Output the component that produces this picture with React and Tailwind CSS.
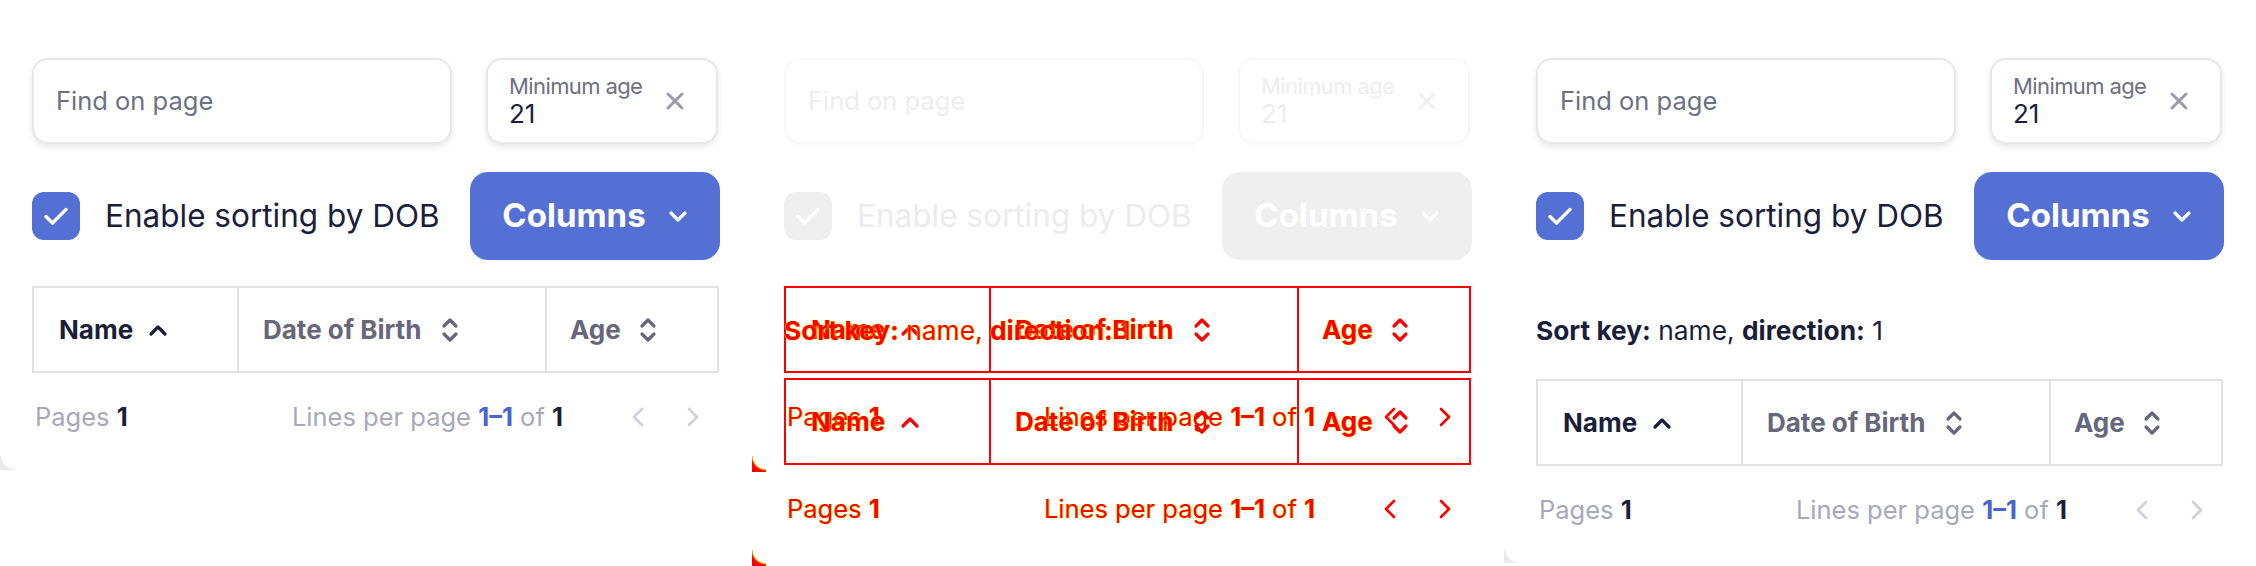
import React from 'react';

// diff tone: red pixels with a thin yellow fringe
const DIFF = 'text-[#ff0000] [text-shadow:0_0_1px_#ffff00,0_0_1px_#ffff00]';

const tones = {
  normal: {
    dark: 'text-[#1b1e3b]',
    head: 'text-[#66677b]',
    muted: 'text-[#a7a9b8]',
    blue: 'text-[#4b64cf]',
    chev: 'text-[#cfd0d8]',
    border: 'border-[#e2e2e2]',
  },
  diff: {
    dark: DIFF,
    head: DIFF,
    muted: DIFF,
    blue: DIFF,
    chev: DIFF,
    border: 'border-[#ff0000]',
  },
};

const Stroke = ({ className, viewBox, d, width = 3.2 }) => (
  <svg viewBox={viewBox} className={className} fill="none" stroke="currentColor" strokeWidth={width} strokeLinecap="round" strokeLinejoin="round">
    <path d={d} />
  </svg>
);

const ChevUp = ({ className }) => <Stroke className={className} viewBox="0 0 20 14" d="M3 11 L10 4 L17 11" />;
const ChevDown = ({ className }) => <Stroke className={className} viewBox="0 0 20 13" d="M3 3 L10 10 L17 3" />;
const UpDown = ({ className }) => <Stroke className={className} viewBox="0 0 20 28" d="M4 10 L10 4 L16 10 M4 18 L10 24 L16 18" />;
const ChevLeft = ({ className }) => <Stroke className={className} viewBox="0 0 14 20" d="M11 2 L3 10 L11 18" width={2.6} />;
const ChevRight = ({ className }) => <Stroke className={className} viewBox="0 0 14 20" d="M3 2 L11 10 L3 18" width={2.6} />;
const XIcon = ({ className }) => <Stroke className={className} viewBox="0 0 20 20" d="M3 3 L17 17 M17 3 L3 17" width={3} />;
const Check = ({ className }) => <Stroke className={className} viewBox="0 0 26 20" d="M3 10.5 L9.5 17 L23 3.5" width={3.4} />;

const Controls = ({ faded }) => (
  <div className="flex flex-col gap-[28px]">
    <div className="flex gap-[34px]">
      <div
        className={`w-[420px] h-[86px] rounded-[16px] border-2 bg-white flex items-center pl-[22px] text-[25.5px] ${
          faded ? 'border-[#f7f7f7] text-[#eeeef0] shadow-[0_3px_6px_rgba(0,0,0,0.02)]' : 'border-[#e8e8e8] text-[#6d7183] shadow-[0_3px_6px_rgba(0,0,0,0.09)]'
        }`}
      >
        Find on page
      </div>
      <div
        className={`w-[232px] h-[86px] rounded-[16px] border-2 bg-white flex items-center pl-[21px] pr-[31px] ${
          faded ? 'border-[#f7f7f7] shadow-[0_3px_6px_rgba(0,0,0,0.02)]' : 'border-[#e8e8e8] shadow-[0_3px_6px_rgba(0,0,0,0.09)]'
        }`}
      >
        <div className="flex flex-col flex-1">
          <span className={`text-[22px] leading-[25px] tracking-[-0.6px] ${faded ? 'text-[#eeeef0]' : 'text-[#6e7082]'}`}>Minimum age</span>
          <span className={`text-[26px] leading-[30px] ${faded ? 'text-[#eeeef0]' : 'text-[#1b1e3b]'}`}>21</span>
        </div>
        <XIcon className={`w-[20px] h-[20px] ${faded ? 'text-[#f1f1f3]' : 'text-[#9c9ca7]'}`} />
      </div>
    </div>

    <div className="flex items-center justify-between">
      <div className="flex items-center gap-[25px]">
        <div className={`w-[48px] h-[48px] rounded-[12px] flex items-center justify-center ${faded ? 'bg-[#efeff0]' : 'bg-[#5570d5]'}`}>
          <Check className="w-[26px] h-[20px] text-white" />
        </div>
        <span className={`text-[31.5px] ${faded ? 'text-[#ececee]' : 'text-[#1b1e3b]'}`}>Enable sorting by DOB</span>
      </div>
      <button className={`w-[250px] h-[88px] rounded-[18px] flex items-center justify-center gap-[22px] text-white font-bold text-[33px] ${faded ? 'bg-[#efeff0]' : 'bg-[#5570d5]'}`}>
        Columns
        <ChevDown className="w-[20px] h-[13px]" />
      </button>
    </div>
  </div>
);

const Table = ({ tone }) => {
  const t = tones[tone];
  return (
    <div className={`w-[687px] h-[87px] border-2 grid grid-cols-[203px_308px_1fr] ${t.border}`}>
      <div className="flex items-center pl-[25px] gap-[15px]">
        <span className={`text-[26px] font-bold ${t.dark}`}>Name</span>
        <ChevUp className={`w-[20px] h-[14px] ${t.dark}`} />
      </div>
      <div className={`border-l-2 flex items-center pl-[24px] gap-[19px] ${t.border}`}>
        <span className={`text-[26px] font-bold ${t.head}`}>Date of Birth</span>
        <UpDown className={`w-[20px] h-[28px] ${t.head}`} />
      </div>
      <div className={`border-l-2 flex items-center pl-[23px] gap-[17px] ${t.border}`}>
        <span className={`text-[26px] font-bold ${t.head}`}>Age</span>
        <UpDown className={`w-[20px] h-[28px] ${t.head}`} />
      </div>
    </div>
  );
};

const Footer = ({ tone }) => {
  const t = tones[tone];
  return (
    <div className="h-[30px] flex items-center justify-between text-[25.5px] pl-[3px] pr-[20px]">
      <span className={t.muted}>
        Pages <span className={`font-bold ${t.dark}`}>1</span>
      </span>
      <div className="flex items-center">
        <span className={t.muted}>
          Lines per page <span className={`font-bold ${t.blue}`}>1–1</span> of <span className={`font-bold ${t.dark}`}>1</span>
        </span>
        <ChevLeft className={`ml-[68px] w-[14px] h-[20px] ${t.chev}`} />
        <ChevRight className={`ml-[41px] w-[14px] h-[20px] ${t.chev}`} />
      </div>
    </div>
  );
};

const SortKey = ({ tone }) => {
  const t = tones[tone];
  return (
    <div className={`h-[30px] flex items-center text-[26.3px] ${t.dark}`}>
      <span>
        <b>Sort key:</b> name, <b>direction:</b> 1
      </span>
    </div>
  );
};

const Panel = ({ withSortKey }) => (
  <div className="w-[752px] h-[566px] bg-white shrink-0">
    <div className="relative bg-white px-[32px] pt-[58px] pb-[38px]">
      <Controls />
      {withSortKey ? (
        <>
          <div className="mt-[56px]"><SortKey tone="normal" /></div>
          <div className="mt-[33px]"><Table tone="normal" /></div>
        </>
      ) : (
        <div className="mt-[26px]"><Table tone="normal" /></div>
      )}
      <div className="mt-[29px]"><Footer tone="normal" /></div>
      {/* background showing past the rounded card corner */}
      <div className="absolute left-0 bottom-0 w-[14px] h-[14px] bg-[radial-gradient(circle_at_100%_0%,#ffffff_12px,#e9e9ec_14px)]" />
    </div>
  </div>
);

const DiffPanel = () => (
  <div className="relative w-[752px] h-[566px] bg-white shrink-0 overflow-hidden">
    <div className="px-[32px] pt-[58px]">
      <Controls faded />
    </div>

    {/* baseline layout, drawn as diff */}
    <div className="absolute inset-0 px-[32px] pt-[286px]">
      <Table tone="diff" />
      <div className="mt-[29px]"><Footer tone="diff" /></div>
    </div>

    {/* actual layout, drawn as diff */}
    <div className="absolute inset-0 px-[32px] pt-[316px]">
      <SortKey tone="diff" />
      <div className="mt-[32px]"><Table tone="diff" /></div>
      <div className="mt-[29px]"><Footer tone="diff" /></div>
    </div>

    {/* card corner differences */}
    <div className="absolute left-0 top-[456px] w-[14px] h-[16px] bg-[radial-gradient(circle_at_100%_0%,transparent_13px,#ffff00_13px,#ff0000_15px)]" />
    <div className="absolute left-0 top-[550px] w-[14px] h-[16px] bg-[radial-gradient(circle_at_100%_0%,transparent_13px,#ffff00_13px,#ff0000_15px)]" />
  </div>
);

export default function App() {
  return (
    <div className="w-[2256px] h-[566px] flex bg-white overflow-hidden font-['Inter','Noto_Sans',sans-serif]">
      <Panel />
      <DiffPanel />
      <Panel withSortKey />
    </div>
  );
}
